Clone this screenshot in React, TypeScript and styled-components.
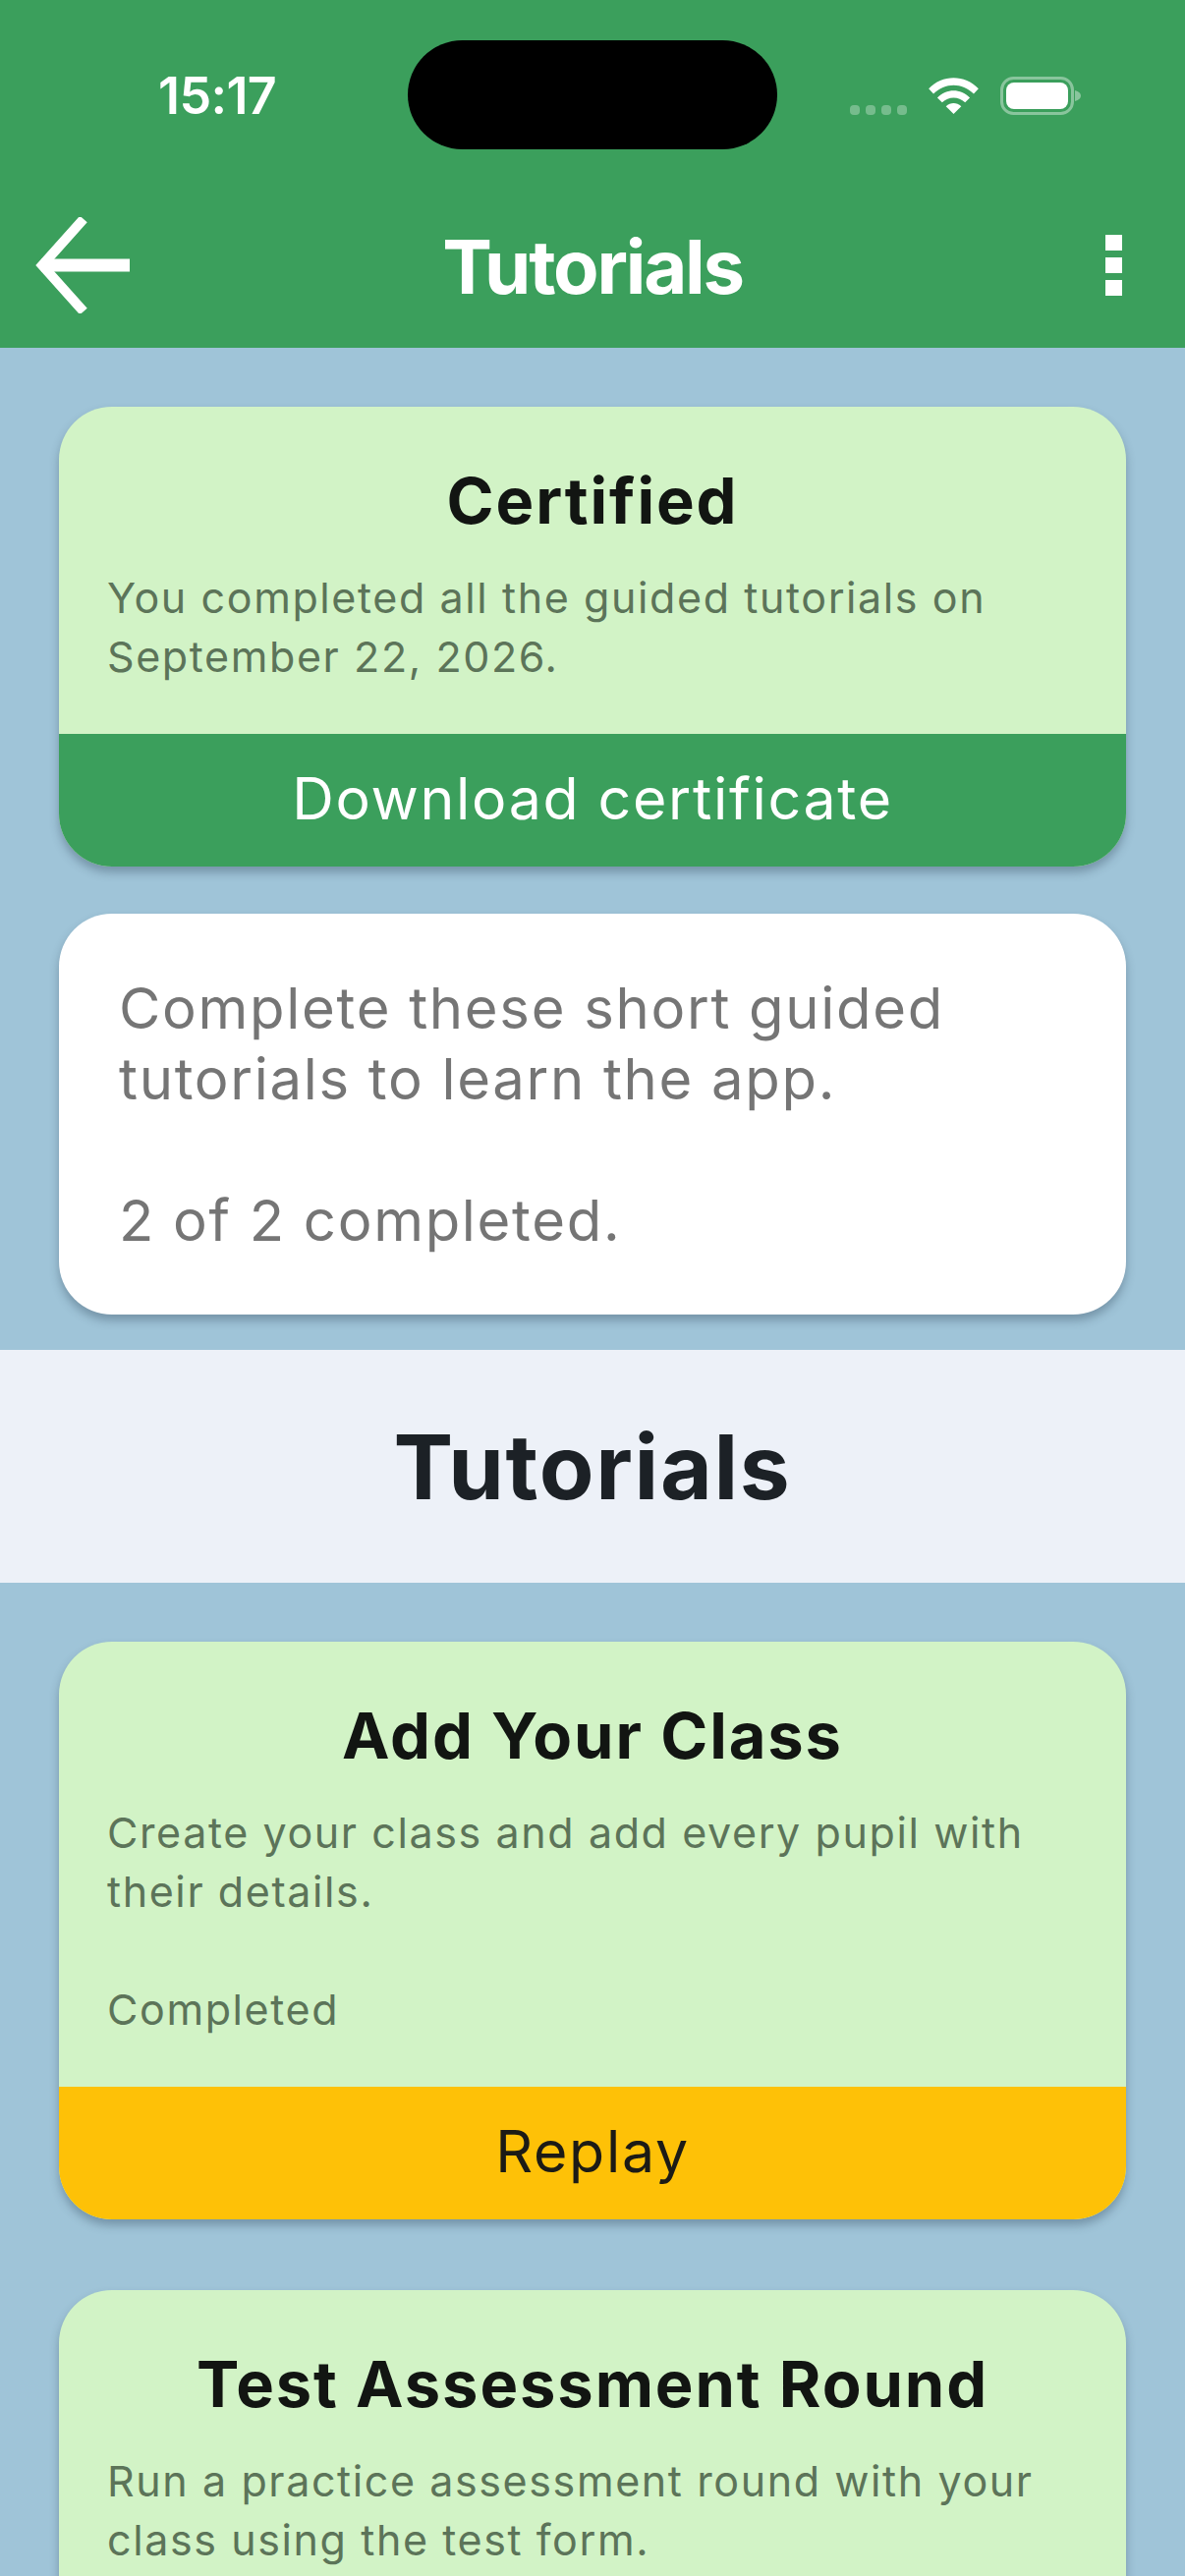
import React from "react"
import styled, { createGlobalStyle } from "styled-components"

const GlobalStyle = createGlobalStyle`
  html, body {
    margin: 0;
    padding: 0;
    background: #9fc4d8;
  }
  body {
    font-family: Inter, "Liberation Sans", sans-serif;
  }
`

const Page = styled.div`
  width: 1206px;
  height: 2622px;
  overflow: hidden;
  display: flex;
  flex-direction: column;
  background: #9fc4d8;
`

const Header = styled.header`
  height: 354px;
  flex: none;
  background: #3b9f5c;
  display: flex;
  flex-direction: column;
`

const StatusBar = styled.div`
  height: 193px;
  padding-top: 41px;
  box-sizing: border-box;
  display: grid;
  grid-template-columns: 415px 376px 1fr;
  align-items: start;
`

const Clock = styled.div`
  padding: 29px 0 0 161px;
  font-size: 52px;
  line-height: 56px;
  font-weight: 600;
  letter-spacing: -0.6px;
  color: #fff;
`

const Notch = styled.div`
  height: 111px;
  border-radius: 56px;
  background: #000;
`

const StatusIcons = styled.div`
  padding: 37px 0 0 74px;
  display: flex;
  align-items: flex-start;
`

const AppBar = styled.div`
  height: 154px;
  display: grid;
  grid-template-columns: 1fr auto 1fr;
  align-items: center;
  padding: 0 34px;
`

const AppBarTitle = styled.h1`
  margin: 2px 0 0;
  font-size: 76px;
  font-weight: 700;
  letter-spacing: -2.2px;
  color: #fff;
`

const MenuButton = styled.div`
  justify-self: end;
  margin-right: 30px;
  display: flex;
  flex-direction: column;
  gap: 7px;
`

const MenuDot = styled.span`
  display: block;
  width: 17px;
  height: 16px;
  background: #fff;
`

const Section = styled.section<{ $top: number; $bottom: number; $gap: number }>`
  flex: none;
  display: flex;
  flex-direction: column;
  gap: ${p => p.$gap}px;
  padding: ${p => p.$top}px 60px ${p => p.$bottom}px;
`

const Card = styled.article<{ $white?: boolean }>`
  border-radius: 54px;
  overflow: hidden;
  flex: none;
  background: ${p => (p.$white ? "#fff" : "#d2f3c6")};
  box-shadow: 0 6px 10px rgba(40, 60, 80, 0.35);
`

const CardBody = styled.div<{ $height: number }>`
  height: ${p => p.$height}px;
  padding: 59px 49px 0;
  box-sizing: border-box;
`

const CardTitle = styled.h2`
  margin: 0 0 31px;
  text-align: center;
  font-size: 65px;
  line-height: 74px;
  font-weight: 700;
  letter-spacing: 1.9px;
  color: #121512;
`

const CardText = styled.p`
  margin: 0;
  font-size: 43px;
  line-height: 60px;
  letter-spacing: 1.6px;
  color: #5c7459;
`

const CardStatus = styled(CardText)`
  margin-top: 60px;
`

const CardAction = styled.div<{ $tone: "green" | "amber" }>`
  height: 135px;
  padding-bottom: 4px;
  box-sizing: border-box;
  display: flex;
  align-items: center;
  justify-content: center;
  font-size: 59px;
  letter-spacing: 1.7px;
  background: ${p => (p.$tone === "green" ? "#3b9f5c" : "#fec107")};
  color: ${p => (p.$tone === "green" ? "#fff" : "#1c1b16")};
`

const IntroText = styled.p`
  margin: 0;
  padding: 60px 60px 60px 61px;
  font-size: 58px;
  line-height: 72px;
  letter-spacing: 1.7px;
  color: #757575;
`

const Band = styled.div`
  height: 237px;
  flex: none;
  background: #edf1f8;
  display: flex;
  align-items: center;
  justify-content: center;
  font-size: 91px;
  font-weight: 700;
  letter-spacing: 1.7px;
  color: #1c2126;
`

const BackArrow = () => (
  <svg width="98" height="98" viewBox="0 0 98 98" fill="none">
    <path d="M98 49H8" stroke="#fff" strokeWidth="13" />
    <path d="M51 2L9 49l42 47" stroke="#fff" strokeWidth="10" />
  </svg>
)

const CellDots = () => (
  <svg width="58" height="12" viewBox="0 0 58 12" style={{ marginTop: 28 }}>
    {[0, 16, 32, 48].map(x => (
      <rect key={x} x={x} width="10" height="10" y="1" rx="4" fill="#fff" opacity="0.3" />
    ))}
  </svg>
)

const WifiIcon = () => (
  <svg width="51" height="38" viewBox="0 0 52 39" style={{ marginLeft: 22, marginTop: 1 }}>
    <path d="M0 11.500C14-3.500 38-3.500 52 11.500L47 17C35 5 17 5 5 17Z" fill="#fff" />
    <path d="M9 21C19 11 33 11 43 21L38 26C31 19.500 21 19.500 14 26Z" fill="#fff" />
    <path d="M18 30C23 25.500 29 25.500 34 30L26 38Z" fill="#fff" />
  </svg>
)

const BatteryIcon = () => (
  <svg width="82" height="40" viewBox="0 0 82 40" style={{ marginLeft: 22 }}>
    <rect x="1.500" y="1.500" width="72" height="36" rx="12" fill="none" stroke="#fff" strokeOpacity="0.4" strokeWidth="3" />
    <rect x="6" y="6" width="63" height="27" rx="8" fill="#fff" />
    <path d="M76 14c4 1 6 3 6 5.500s-2 4.500-6 5.500z" fill="#fff" fillOpacity="0.4" />
  </svg>
)

export default function App() {
  return (
    <Page>
      <GlobalStyle />
      <Header>
        <StatusBar>
          <Clock>15:17</Clock>
          <Notch />
          <StatusIcons>
            <CellDots />
            <WifiIcon />
            <BatteryIcon />
          </StatusIcons>
        </StatusBar>
        <AppBar>
          <BackArrow />
          <AppBarTitle>Tutorials</AppBarTitle>
          <MenuButton>
            <MenuDot />
            <MenuDot />
            <MenuDot />
          </MenuButton>
        </AppBar>
      </Header>

      <Section $top={60} $bottom={36} $gap={48}>
        <Card>
          <CardBody $height={333}>
            <CardTitle>Certified</CardTitle>
            <CardText>You completed all the guided tutorials on September 22, 2026.</CardText>
          </CardBody>
          <CardAction $tone="green">Download certificate</CardAction>
        </Card>
        <Card $white>
          <IntroText>
            Complete these short guided tutorials to learn the app.
            <br />
            <br />
            2 of 2 completed.
          </IntroText>
        </Card>
      </Section>

      <Band>Tutorials</Band>

      <Section $top={60} $bottom={0} $gap={72}>
        <Card>
          <CardBody $height={453}>
            <CardTitle>Add Your Class</CardTitle>
            <CardText>Create your class and add every pupil with their details.</CardText>
            <CardStatus>Completed</CardStatus>
          </CardBody>
          <CardAction $tone="amber">Replay</CardAction>
        </Card>
        <Card>
          <CardBody $height={453}>
            <CardTitle>Test Assessment Round</CardTitle>
            <CardText>Run a practice assessment round with your class using the test form.</CardText>
          </CardBody>
        </Card>
      </Section>
    </Page>
  )
}
